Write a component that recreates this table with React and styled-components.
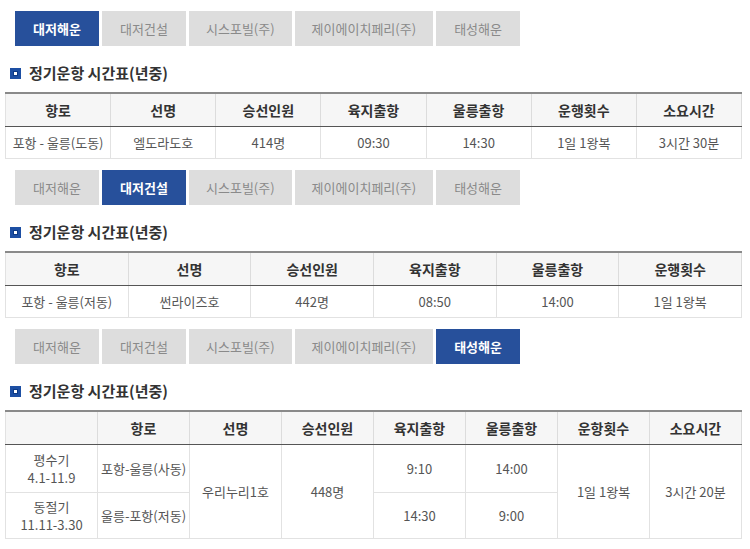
import React from 'react';
import styled, { createGlobalStyle } from 'styled-components';

const GlobalStyle = createGlobalStyle`
  body {
    margin: 0;
    background: #fff;
    font-family: "Noto Sans CJK KR", "Noto Sans", sans-serif;
    color: #555;
  }
`

const Page = styled.div`
  width: 737px;
  padding: 11px 0 0 5px;
`

const Section = styled.section`
  margin-bottom: 11px;
`

const Tabs = styled.ul`
  display: flex;
  gap: 3px;
  margin: 0 0 0 10px;
  padding: 0;
  list-style: none;
`

const Tab = styled.li`
  height: 35px;
  padding: 0 17px;
  display: flex;
  align-items: center;
  justify-content: center;
  min-width: 50px;
  font-size: 13px;
  background: ${p => (p.active ? '#27509b' : '#dddddd')};
  color: ${p => (p.active ? '#fff' : '#8a8a8a')};
  font-weight: ${p => (p.active ? 700 : 400)};
`

const Heading = styled.h3`
  display: flex;
  align-items: center;
  gap: 8px;
  margin: 17px 0 9px 5px;
  height: 20px;
  font-size: 15px;
  line-height: 20px;
  font-weight: 700;
  color: #333;
`

const Bullet = styled.span`
  width: 11px;
  height: 11px;
  box-sizing: border-box;
  border: 3px solid #1d4fa3;
  background: #fff;
  box-shadow: inset 0 0 0 1px #0c3a86;
`

const Table = styled.table`
  width: 100%;
  border-collapse: collapse;
  table-layout: fixed;
  border-top: 2px solid #8a8a8a;
  border-left: 1px solid #e2e2e2;
  border-right: 1px solid #e2e2e2;

  th {
    height: 32px;
    background: #f6f6f6;
    font-size: 14px;
    font-weight: 700;
    color: #333;
    border-right: 1px solid #dcdcdc;
    border-bottom: 1px solid #555;
    padding: 0;
  }

  td {
    height: 31px;
    font-size: 13px;
    line-height: 18px;
    text-align: center;
    color: #555;
    border-right: 1px solid #e2e2e2;
    border-bottom: 1px solid #e2e2e2;
    padding: 0;
  }
`

const TallCell = styled.td`
  && {
    height: ${p => p.h}px;
  }
`

const companies = ['대저해운', '대저건설', '시스포빌(주)', '제이에이치페리(주)', '태성해운']

const TabBar = ({ active }) => (
  <Tabs>
    {companies.map(c => (
      <Tab key={c} active={c === active}>{c}</Tab>
    ))}
  </Tabs>
)

const Title = () => (
  <Heading>
    <Bullet />
    정기운항 시간표(년중)
  </Heading>
)

const SimpleTable = ({ head, row }) => (
  <Table>
    <thead>
      <tr>{head.map(h => <th key={h}>{h}</th>)}</tr>
    </thead>
    <tbody>
      <tr>{row.map((c, i) => <td key={i}>{c}</td>)}</tr>
    </tbody>
  </Table>
)

export default function App() {
  return (
    <Page>
      <GlobalStyle />
      <Section>
        <TabBar active="대저해운" />
        <Title />
        <SimpleTable
          head={['항로', '선명', '승선인원', '육지출항', '울릉출항', '운행횟수', '소요시간']}
          row={['포항 - 울릉(도동)', '엘도라도호', '414명', '09:30', '14:30', '1일 1왕복', '3시간 30분']}
        />
      </Section>
      <Section>
        <TabBar active="대저건설" />
        <Title />
        <SimpleTable
          head={['항로', '선명', '승선인원', '육지출항', '울릉출항', '운행횟수']}
          row={['포항 - 울릉(저동)', '썬라이즈호', '442명', '08:50', '14:00', '1일 1왕복']}
        />
      </Section>
      <Section>
        <TabBar active="태성해운" />
        <Title />
        <Table>
          <thead>
            <tr>
              <th></th>
              <th>항로</th>
              <th>선명</th>
              <th>승선인원</th>
              <th>육지출항</th>
              <th>울릉출항</th>
              <th>운항횟수</th>
              <th>소요시간</th>
            </tr>
          </thead>
          <tbody>
            <tr>
              <TallCell h={47}>평수기<br />4.1-11.9</TallCell>
              <td>포항-울릉(사동)</td>
              <td rowSpan={2}>우리누리1호</td>
              <td rowSpan={2}>448명</td>
              <td>9:10</td>
              <td>14:00</td>
              <td rowSpan={2}>1일 1왕복</td>
              <td rowSpan={2}>3시간 20분</td>
            </tr>
            <tr>
              <TallCell h={45}>동절기<br />11.11-3.30</TallCell>
              <td>울릉-포항(저동)</td>
              <td>14:30</td>
              <td>9:00</td>
            </tr>
          </tbody>
        </Table>
      </Section>
    </Page>
  );
}
